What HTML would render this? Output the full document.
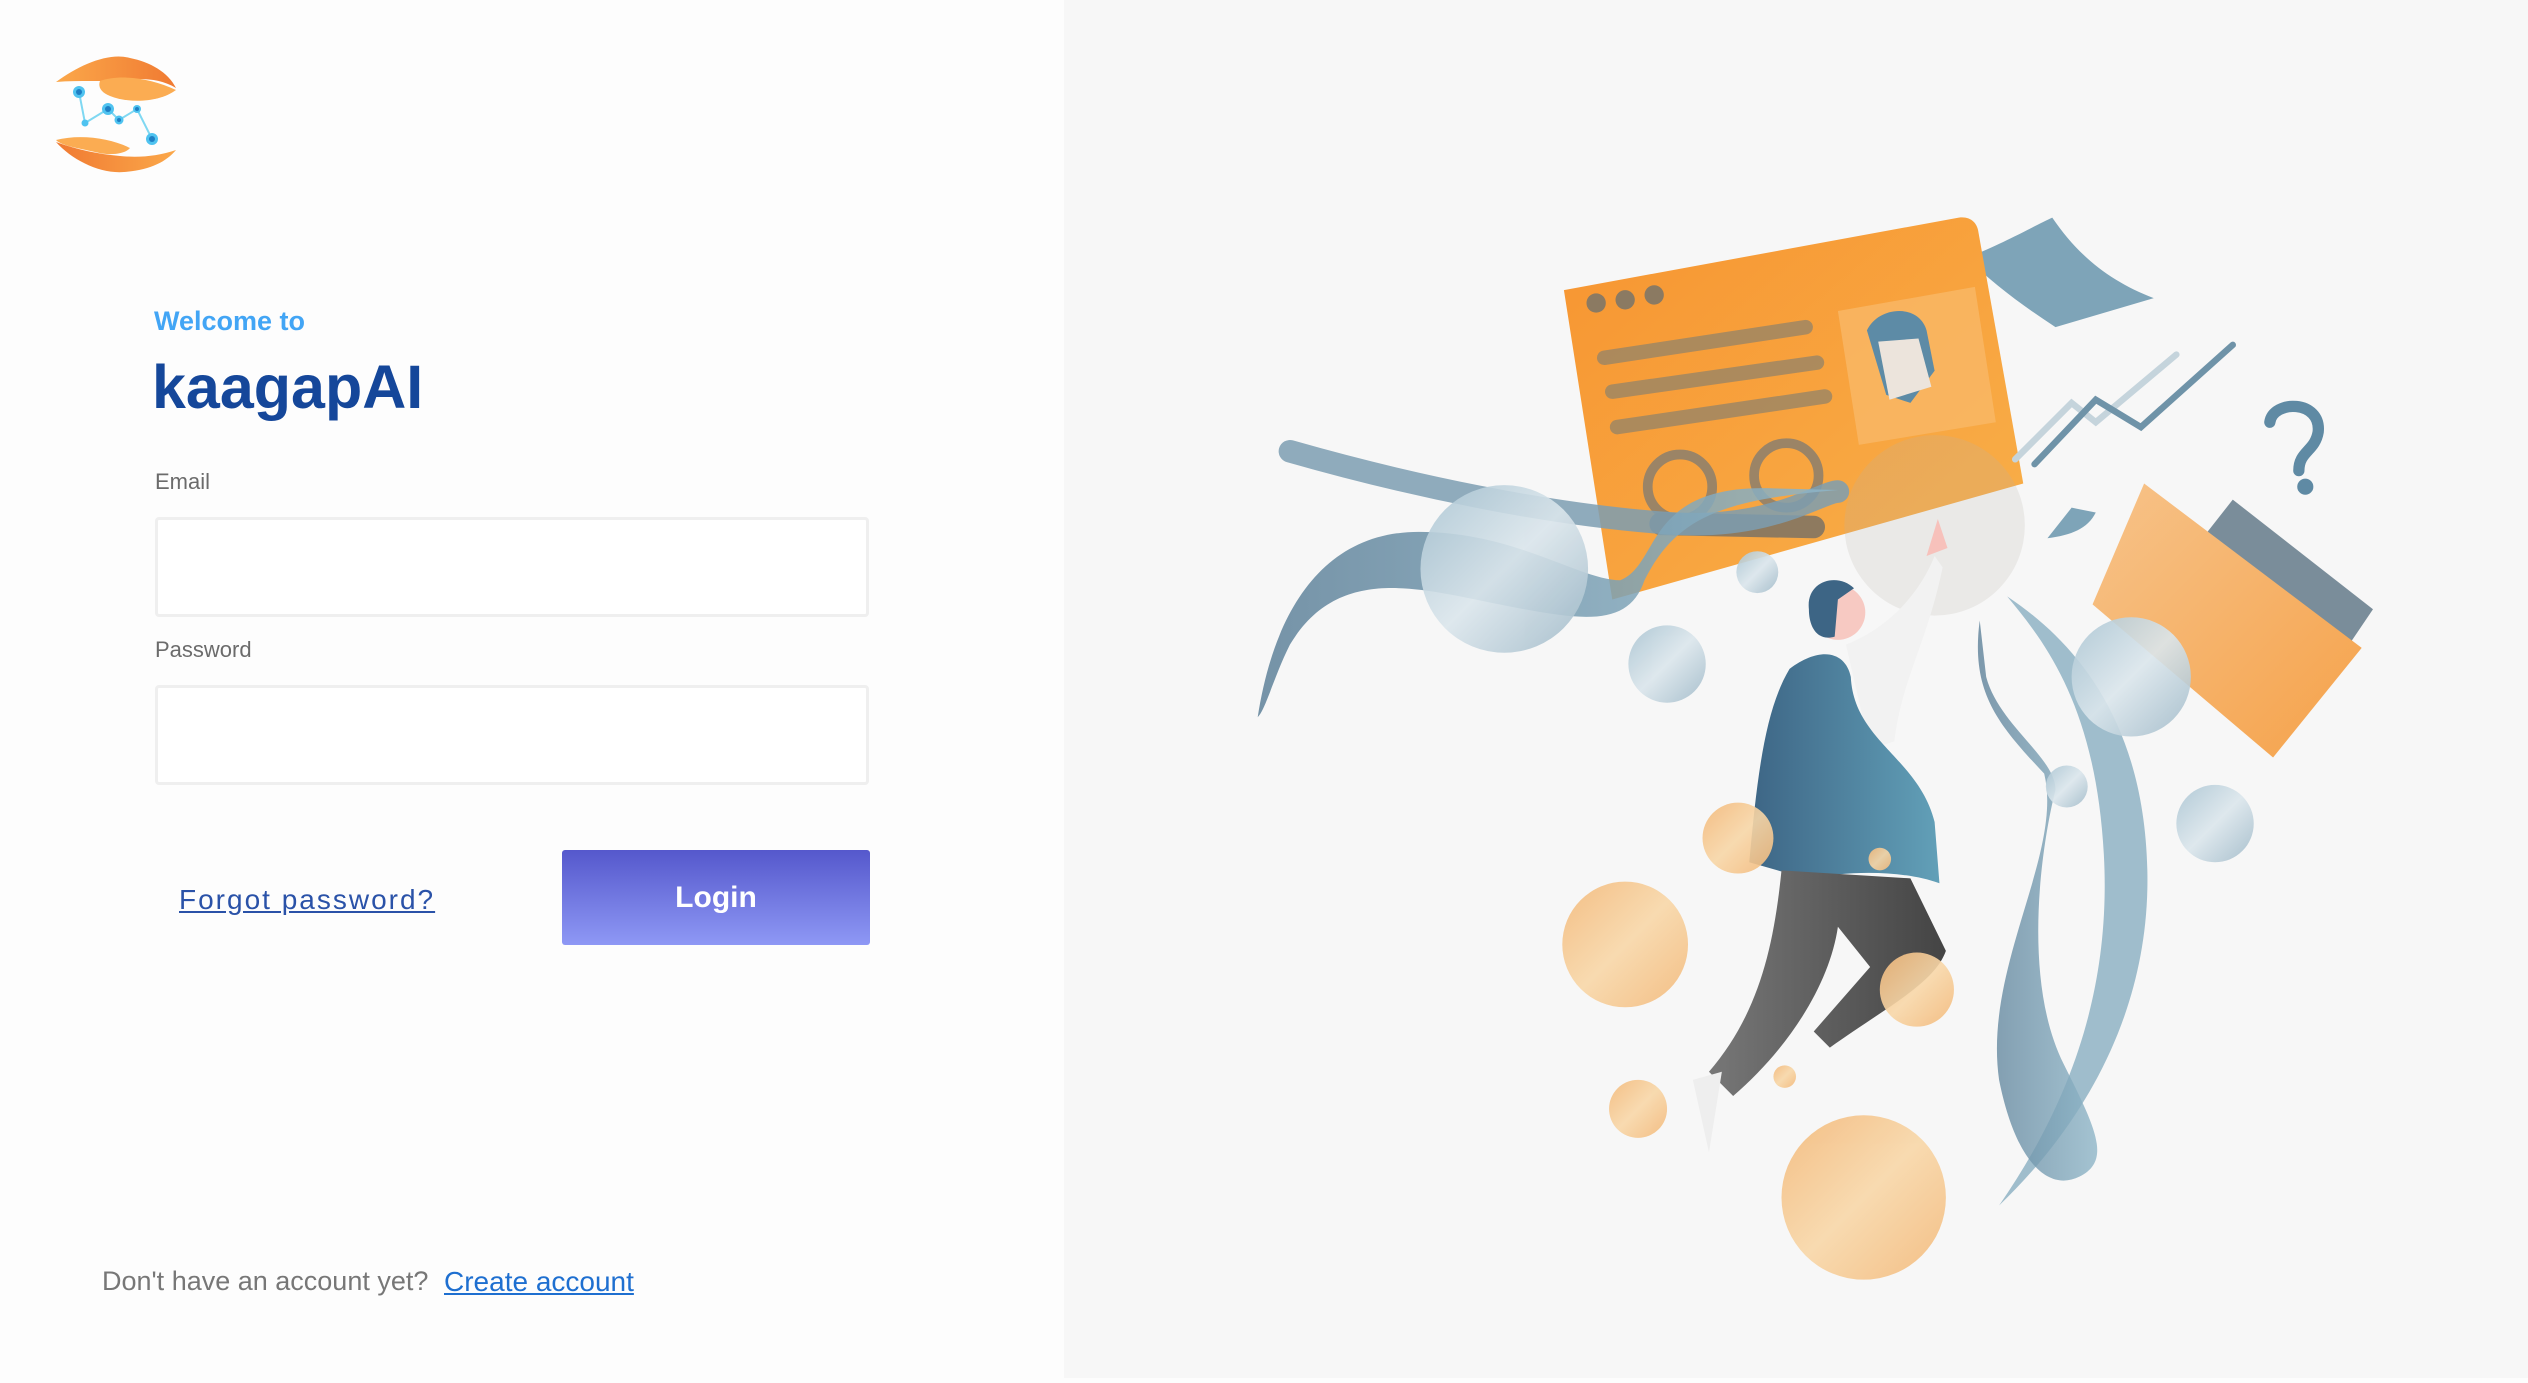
<!DOCTYPE html>
<html><head><meta charset="utf-8"><style>
html,body{margin:0;padding:0}
body{width:2528px;height:1378px;position:relative;overflow:hidden;font-family:"Liberation Sans",Roboto,sans-serif;background:#fdfdfd}
.right{position:absolute;left:1064px;top:0;width:1464px;height:1378px;background:#f7f7f7}
.abs{position:absolute}
.inp{position:absolute;left:155px;width:708px;border:3px solid #efefef;border-radius:4px;background:#fff}
.lbl{position:absolute;left:155px;font-size:22px;color:#6b6b6b}
</style></head><body>
<svg class="abs" style="left:0;top:0" width="200" height="200" viewBox="0 0 200 200">
<defs><linearGradient id="lg" x1="0" x2="1"><stop offset="0" stop-color="#fba84a"/><stop offset="1" stop-color="#f07a32"/></linearGradient>
<linearGradient id="lg2" x1="1" x2="0"><stop offset="0" stop-color="#fba84a"/><stop offset="1" stop-color="#f07a32"/></linearGradient></defs>
<path d="M56 82 C80 64 110 52 130 58 C150 62 168 72 176 88 C160 78 140 78 122 80 C104 82 80 80 56 82Z" fill="url(#lg)"/>
<path d="M100 81 C120 74 150 78 176 90 C160 102 130 104 110 96 C100 92 98 86 100 81Z" fill="#fbac52"/>
<path d="M56 140 C80 134 110 138 130 148 C125 154 110 156 95 152 C78 148 62 146 56 140Z" fill="#fbac52"/>
<path d="M56 142 C72 160 100 174 124 172 C150 170 166 162 176 150 C158 156 140 158 120 156 C98 154 78 150 56 142Z" fill="url(#lg2)"/>
<g stroke="#7fd8f2" stroke-width="2" fill="none"><polyline points="79,92 85,123 108,109 119,120 137,109 152,139"/></g>
<g fill="#4fc3f0"><circle cx="79" cy="92" r="6"/><circle cx="85" cy="123" r="3.5"/><circle cx="108" cy="109" r="6"/><circle cx="119" cy="120" r="4.5"/><circle cx="137" cy="109" r="4"/><circle cx="152" cy="139" r="6"/></g>
<g fill="#1e7fc4"><circle cx="79" cy="92" r="3"/><circle cx="108" cy="109" r="3"/><circle cx="119" cy="120" r="2"/><circle cx="137" cy="109" r="2"/><circle cx="152" cy="139" r="3"/></g>
</svg>
<div class="abs" style="left:154px;top:306px;font-size:27px;color:#42a5f5;font-weight:bold">Welcome to</div>
<div class="abs" style="left:152px;top:352px;font-size:61px;color:#15479a;font-weight:bold">kaagapAI</div>
<div class="lbl" style="top:469px">Email</div>
<div class="inp" style="top:517px;height:94px"></div>
<div class="lbl" style="top:637px">Password</div>
<div class="inp" style="top:685px;height:94px"></div>
<div class="abs" style="left:179px;top:884px;font-size:28px;color:#2a52a8;text-decoration:underline;letter-spacing:2px">Forgot password?</div>
<div class="abs" style="left:562px;top:850px;width:308px;height:95px;border-radius:3px;background:linear-gradient(#5558cc,#8e98f5);color:#fff;font-size:30px;font-weight:bold;text-align:center;line-height:95px">Login</div>
<div class="abs" style="left:102px;top:1266px;font-size:27px;color:#777">Don't have an account yet?</div>
<div class="abs" style="left:444px;top:1266px;font-size:28px;color:#1e6fd0;text-decoration:underline">Create account</div>
<div class="right">
<svg width="1464" height="1378" viewBox="660 0 908 855">
<defs>
<linearGradient id="or" x1="0" y1="0" x2="1" y2="1"><stop offset="0" stop-color="#f79531"/><stop offset="1" stop-color="#f8b04a"/></linearGradient>
<linearGradient id="bl" x1="0" y1="0" x2="1" y2="1"><stop offset="0" stop-color="#a9c4d2"/><stop offset=".5" stop-color="#dbe6ec"/><stop offset="1" stop-color="#9fb9c8"/></linearGradient>
<linearGradient id="oc" x1="0" y1="0" x2="1" y2="1"><stop offset="0" stop-color="#f3b878"/><stop offset=".5" stop-color="#f8d7a8"/><stop offset="1" stop-color="#f3b878"/></linearGradient>
<linearGradient id="sw" x1="0" x2="1"><stop offset="0" stop-color="#5e8199"/><stop offset="1" stop-color="#8fb6c8"/></linearGradient>
<linearGradient id="bd" x1="0" x2="1"><stop offset="0" stop-color="#3d6585"/><stop offset="1" stop-color="#62a0b8"/></linearGradient>
<linearGradient id="lgp" x1="0" x2="1"><stop offset="0" stop-color="#777"/><stop offset="1" stop-color="#444"/></linearGradient>
<linearGradient id="fo" x1="0" y1="0" x2="1" y2="1"><stop offset="0" stop-color="#f7c38a"/><stop offset="1" stop-color="#f5a24a"/></linearGradient>
</defs>
<path d="M1220 160 C1245 150 1262 140 1273 135 C1290 160 1310 175 1336 185 L1275 203 C1255 190 1235 175 1220 160Z" fill="#7ea4b8"/>
<path d="M970 180 L1215 135 C1222 134 1226 138 1227 143 L1255 300 L1000 372 Z" fill="url(#or)"/>
<g fill="#8b7a62"><circle cx="990" cy="188" r="6"/><circle cx="1008" cy="186" r="6"/><circle cx="1026" cy="183" r="6"/></g>
<g stroke="#a08763" stroke-width="9" stroke-linecap="round" opacity=".85"><line x1="995" y1="222" x2="1120" y2="203"/><line x1="1000" y1="243" x2="1127" y2="225"/><line x1="1003" y1="265" x2="1132" y2="246"/></g>
<path d="M1140 193 L1225 178 L1238 262 L1153 276Z" fill="#f9b866" opacity=".8"/>
<path d="M1158 205 C1165 190 1190 188 1195 205 L1200 230 L1185 250 L1170 245 Z" fill="#5d8ba6"/>
<path d="M1165 212 L1190 210 L1198 240 L1172 248Z" fill="#ece4dc"/>
<g stroke="#9b8466" stroke-width="6" fill="none"><circle cx="1042" cy="302" r="20"/><circle cx="1108" cy="295" r="20"/></g>
<line x1="1030" y1="325" x2="1125" y2="327" stroke="#8e7a5f" stroke-width="14" stroke-linecap="round"/>
<g fill="#b9b4ac" opacity=".2"><circle cx="1200" cy="326" r="56"/><circle cx="1200" cy="326" r="38"/><circle cx="1200" cy="326" r="20"/></g>
<g fill="none" stroke-linecap="round"><polyline points="1250,285 1285,250 1300,262 1350,220" stroke="#c5d4dc" stroke-width="4"/><polyline points="1262,288 1300,248 1328,265 1385,214" stroke="#6f93a8" stroke-width="4"/></g>
<path d="M1408 262 C1410 248 1440 248 1438 268 C1436 280 1426 280 1426 292" stroke="#5f8aa4" stroke-width="7" fill="none" stroke-linecap="round"/>
<circle cx="1430" cy="302" r="5" fill="#5f8aa4"/>
<path d="M1285 315 L1300 318 C1295 328 1285 332 1270 334Z" fill="#7ea4b8"/>
<path d="M1385 310 L1472 378 L1420 455 L1330 380 Z" fill="#7a8d9a"/>
<path d="M1330 300 L1465 402 L1410 470 L1298 375 Z" fill="url(#fo)"/>
<path d="M800 280 C870 300 960 320 1040 325 C1100 328 1130 305 1140 305" stroke="#7d9db2" stroke-width="14" fill="none" opacity=".85" stroke-linecap="round"/>
<path d="M780 445 C790 380 820 330 880 330 C940 330 980 360 1005 360 C1030 350 1020 300 1100 303 L1140 304 C1070 310 1040 320 1020 360 C1010 390 980 385 930 375 C880 365 830 350 800 400 C790 420 785 440 780 445Z" fill="url(#sw)" opacity=".85"/>
<path d="M1245 370 C1290 400 1330 450 1332 540 C1334 630 1290 700 1240 748 C1280 690 1310 620 1305 530 C1300 440 1270 400 1245 370Z" fill="#8fb3c4" opacity=".85"/>
<path d="M1228 385 C1222 430 1240 450 1268 480 C1280 530 1230 600 1240 670 C1250 720 1270 740 1290 730 C1310 720 1300 700 1280 660 C1255 610 1265 530 1275 490 C1275 470 1240 450 1232 420Z" fill="url(#sw)" opacity=".8"/>
<g fill="url(#bl)" opacity=".9"><circle cx="933" cy="353" r="52"/><circle cx="1034" cy="412" r="24"/><circle cx="1090" cy="355" r="13"/><circle cx="1322" cy="420" r="37"/><circle cx="1374" cy="511" r="24"/><circle cx="1282" cy="488" r="13"/></g>
<path d="M1145 400 C1170 390 1190 370 1200 345 L1205 352 C1195 400 1180 420 1175 460 L1160 465Z" fill="#f2f2f2"/>
<path d="M1195 345 L1202 322 L1208 340Z" fill="#f7c1bb"/>
<path d="M1110 415 C1130 400 1145 405 1148 420 C1150 460 1190 470 1200 510 L1203 548 C1180 540 1150 540 1120 545 L1085 535 C1090 480 1095 440 1110 415Z" fill="url(#bd)"/>
<path d="M1105 540 C1100 590 1090 630 1060 665 L1075 680 C1110 650 1135 610 1140 575 L1160 600 L1125 640 L1135 650 C1170 625 1200 610 1207 590 L1185 545 Z" fill="url(#lgp)"/>
<path d="M1050 670 L1068 665 L1060 715 Z" fill="#eee"/>
<circle cx="1140" cy="380" r="17" fill="#f7c9c2"/>
<path d="M1122 378 C1120 360 1140 355 1150 365 L1140 372 L1138 395 C1128 398 1122 390 1122 378Z" fill="#3d6585"/>
<g fill="url(#oc)" opacity=".9"><circle cx="1008" cy="586" r="39"/><circle cx="1156" cy="743" r="51"/><circle cx="1016" cy="688" r="18"/><circle cx="1078" cy="520" r="22"/><circle cx="1189" cy="614" r="23"/><circle cx="1107" cy="668" r="7"/><circle cx="1166" cy="533" r="7"/></g>
</svg>
</div>
</body></html>
